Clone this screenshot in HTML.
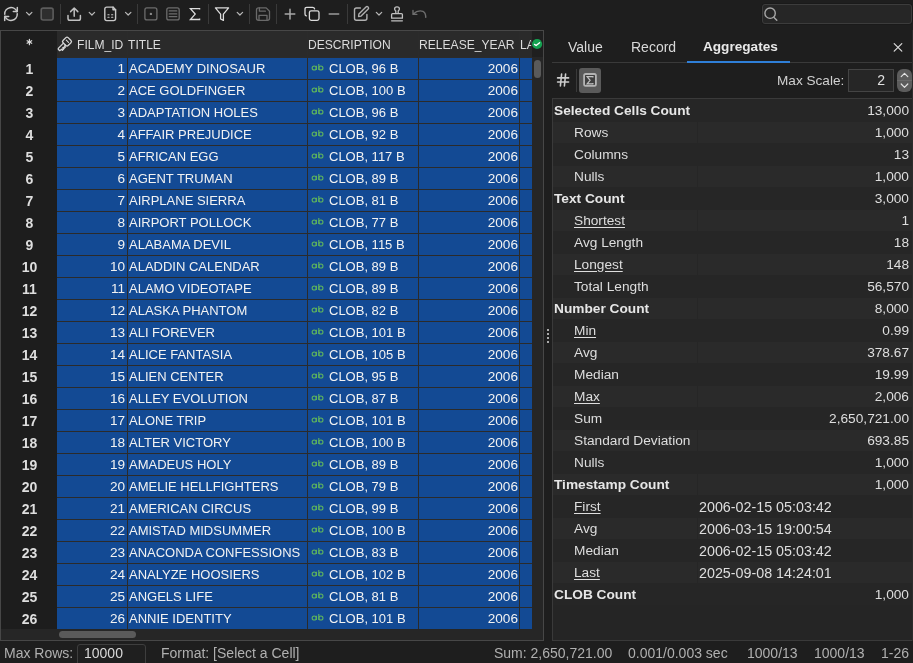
<!DOCTYPE html>
<html><head><meta charset="utf-8">
<style>
*{margin:0;padding:0;box-sizing:border-box}
html{background:#1e1e1e}body{will-change:transform;width:913px;height:663px;overflow:hidden;background:#1e1e1e;font-family:"Liberation Sans",sans-serif;color:#e0e0e0;font-size:13px}
.abs{position:absolute}
svg{position:absolute;overflow:visible}
.sep{position:absolute;width:1px;background:#3a3a3a;top:4px;height:20px}
#grid{position:absolute;left:1px;top:30px;width:543px;height:611px;border:1px solid #474747;background:#262626;overflow:hidden}
.rh{position:absolute;left:2px;width:55px;height:22px;line-height:22px;padding-top:1px;text-align:center;font-weight:bold;color:#dedede;font-size:14px}
.c{position:absolute;height:22px;line-height:22px;padding-top:1px;white-space:nowrap;color:#f2f2f2}
.c.r{text-align:right;font-size:13.6px}
.ab{color:#5cb85c;font-size:9px;font-weight:bold;line-height:20px}
.hl{position:absolute;left:57px;width:475px;height:1px;background:#2b2b2b}
.vl{position:absolute;top:31px;width:1px;height:598px;background:#2b2b2b}
.hdr{position:absolute;top:31.5px;height:26px;line-height:26px;color:#dcdcdc;white-space:nowrap;transform:scaleX(0.93);transform-origin:0 0}
.ar{position:absolute;left:553px;width:359px;height:22px;background:#262626}
.ar.alt{background:#2a2a2a}
.ar.alt::before{content:"";position:absolute;left:0;top:0;width:359px;height:1px;background:#262626}.ar.alt::after{content:"";position:absolute;left:144px;top:0;width:1px;height:22px;background:#262626}
.an{position:absolute;top:1px;line-height:22px;white-space:nowrap;color:#dedede;font-size:13.7px}
.an.b{font-weight:bold;color:#e6e6e6}
.an u{text-decoration:underline;text-underline-offset:2px}
.av{position:absolute;right:3px;top:1px;line-height:22px;color:#dedede;font-size:13.7px}
.st{position:absolute;top:642px;line-height:22px;color:#b0b0b0;white-space:nowrap;font-size:14px}
</style></head><body>
<!-- toolbar -->
<div class="sep" style="left:60px"></div>
<div class="sep" style="left:137px"></div>
<div class="sep" style="left:208px"></div>
<div class="sep" style="left:249px"></div>
<div class="sep" style="left:276px"></div>
<div class="sep" style="left:347px"></div>
<div class="abs" style="left:761px;top:3px;width:152px;height:22px;border:1px solid #1a1a1a;border-radius:4px"></div><div class="abs" style="left:762px;top:4px;width:150px;height:20px;border:1px solid #3c3c3c;border-radius:3px;background:#262626"></div>

<!-- toolbar icons -->
<svg width="913" height="30" style="left:0;top:0" fill="none" stroke-linecap="round" stroke-linejoin="round">
 <!-- refresh -->
 <g stroke="#c8c8c8" stroke-width="1.5">
  <path d="M4.75 14.2 A6.25 6.25 0 0 1 16.9 11.8"/>
  <path d="M17.25 13.8 A6.25 6.25 0 0 1 5.1 16.2"/>
  <path d="M17.3 7.4 V11.6 H13.3"/>
  <path d="M4.7 20.6 V16.4 H8.7"/>
 </g>
 <g stroke="#b8b8b8" stroke-width="1.2">
  <path d="M26.5 12.3 L29.2 15 L31.9 12.3"/>
  <path d="M89.2 12.3 L91.9 15 L94.6 12.3"/>
  <path d="M125.5 12.3 L128.2 15 L130.9 12.3"/>
  <path d="M237.2 12.3 L239.9 15 L242.6 12.3"/>
  <path d="M376.3 12.3 L379 15 L381.7 12.3"/>
 </g>
 <!-- stop -->
 <rect x="41.2" y="8.1" width="11.9" height="11.9" rx="2" fill="#2e2e2e" stroke="#5c5c5c" stroke-width="1.6"/>
 <!-- upload -->
 <g stroke="#c0c0c0" stroke-width="1.5">
  <path d="M68 15.5 V18.4 Q68 20.2 69.8 20.2 H78.6 Q80.4 20.2 80.4 18.4 V15.5"/>
  <path d="M74.2 16.2 V8.2 M70.6 11.6 L74.2 8 L77.8 11.6"/>
 </g>
 <!-- file -->
 <g stroke="#c8c8c8" stroke-width="1.4">
  <path d="M113 7.1 H106.8 Q104.8 7.1 104.8 9.1 V18.6 Q104.8 20.6 106.8 20.6 H113.6 Q115.6 20.6 115.6 18.6 V9.7 Z"/>
  <path d="M113 7.1 V9.7 H115.6"/>
  <path d="M107.9 14.8 H109.1 M111.6 14.8 H112.8 M107.9 17.3 H109.1 M111.6 17.3 H112.8" stroke-width="1.1"/>
 </g>
 <!-- box dot -->
 <rect x="144.9" y="7.9" width="12" height="12" rx="2" stroke="#6c6c6c" stroke-width="1.3"/>
 <circle cx="150.9" cy="13.9" r="1.2" fill="#8a8a8a"/>
 <!-- list box -->
 <rect x="166.8" y="7.9" width="12.4" height="12" rx="2" stroke="#6c6c6c" stroke-width="1.3"/>
 <path d="M169.2 10.9 H176.8 M169.2 13.9 H176.8 M169.2 16.7 H176.8" stroke="#6c6c6c" stroke-width="1.2"/>
 <!-- sigma -->
 <path d="M199.6 9.6 V8.6 H190.4 L195.2 14.1 L190.4 19.5 H199.6 V18.4" stroke="#dcdcdc" stroke-width="1.3" stroke-linecap="butt" stroke-linejoin="miter"/>
 <!-- filter -->
 <path d="M215.4 7.9 H228.6 L223.4 14.2 V20.4 L220.6 19 V14.2 Z" stroke="#dcdcdc" stroke-width="1.3"/>
 <!-- save -->
 <g stroke="#6a6a6a" stroke-width="1.3">
  <path d="M258.6 7.9 H266.2 L269.5 11.2 V18.2 Q269.5 20.3 267.4 20.3 H258.6 Q256.5 20.3 256.5 18.2 V10 Q256.5 7.9 258.6 7.9 Z"/>
  <path d="M259.4 8 V11.2 H265.4"/>
  <path d="M259 20.2 V15.4 H267 V20.2"/>
 </g>
 <!-- plus -->
 <path d="M290 9.2 V18.9 M285.2 14 H294.8" stroke="#a8a8a8" stroke-width="1.5"/>
 <!-- copy -->
 <g stroke="#dcdcdc" stroke-width="1.3">
  <path d="M306.3 15.9 Q305 15.6 305 14 V9 Q305 7.3 306.7 7.3 H312.6 Q314.3 7.3 314.6 8.8"/>
  <rect x="309.4" y="10.8" width="9.6" height="9.6" rx="1.8"/>
 </g>
 <!-- minus -->
 <path d="M329.2 13.9 H338.7" stroke="#9a9a9a" stroke-width="1.5"/>
 <!-- edit -->
 <g stroke="#b0b0b0" stroke-width="1.4">
  <path d="M360.4 8 H356.4 Q354.5 8 354.5 9.9 V18.3 Q354.5 20.2 356.4 20.2 H365 Q366.9 20.2 366.9 18.3 V14.5"/>
  <path d="M358.6 16.5 L358.9 14 L366 6.9 Q367 6 368 6.9 L368.2 7.1 Q369.1 8.1 368.2 9 L361.1 16.1 Z"/>
 </g>
 <!-- stamp -->
 <g stroke="#c0c0c0" stroke-width="1.3">
  <path d="M395.8 13.4 V11 Q394.6 10 394.6 8.9 Q394.6 6.9 397 6.9 Q399.4 6.9 399.4 8.9 Q399.4 10 398.2 11 V13.4"/>
  <path d="M391.6 18.2 V14.6 Q391.6 13.6 392.6 13.6 H401.4 Q402.4 13.6 402.4 14.6 V18.2 Z"/>
  <path d="M391.6 20.8 H402.4"/>
 </g>
 <!-- undo -->
 <path d="M413 14.2 Q418 9.6 423 11.4 Q425.6 12.6 425.8 17.4 M413 10.4 V14.4 H416.8" stroke="#6e6e6e" stroke-width="1.4"/>
 <!-- search -->
 <g stroke="#a8a8a8" stroke-width="1.4">
  <circle cx="770.1" cy="13.2" r="5.2"/>
  <path d="M774 17.4 L776.8 20.2"/>
 </g>
</svg>
<!-- grid -->
<div class="abs" style="left:0px;top:30px;width:544px;height:611px;border:1px solid #474747;background:#262626"></div>
<div class="abs" style="left:1px;top:31px;width:56px;height:598px;background:#1d1d1d"></div>
<div class="abs" style="left:57px;top:31px;width:475px;height:26px;background:#2a2a2a"></div>
<div class="abs" style="left:532px;top:31px;width:11px;height:26px;background:#1f1f1f"></div>
<div class="abs" style="left:532px;top:57px;width:11px;height:572px;background:#262626"></div>
<div class="abs" style="left:534px;top:60px;width:7px;height:18px;background:#5a5a5a;border-radius:4px"></div>
<div class="abs" style="left:57px;top:57px;width:475px;height:572px;background:#134a94"></div>
<div class="abs" style="left:1px;top:629px;width:542px;height:11px;background:#262626"></div>
<div class="abs" style="left:59px;top:631px;width:77px;height:7px;background:#5a5a5a;border-radius:4px"></div>
<div class="hl" style="top:57px"></div>
<div class="hl" style="top:79px"></div>
<div class="hl" style="top:101px"></div>
<div class="hl" style="top:123px"></div>
<div class="hl" style="top:145px"></div>
<div class="hl" style="top:167px"></div>
<div class="hl" style="top:189px"></div>
<div class="hl" style="top:211px"></div>
<div class="hl" style="top:233px"></div>
<div class="hl" style="top:255px"></div>
<div class="hl" style="top:277px"></div>
<div class="hl" style="top:299px"></div>
<div class="hl" style="top:321px"></div>
<div class="hl" style="top:343px"></div>
<div class="hl" style="top:365px"></div>
<div class="hl" style="top:387px"></div>
<div class="hl" style="top:409px"></div>
<div class="hl" style="top:431px"></div>
<div class="hl" style="top:453px"></div>
<div class="hl" style="top:475px"></div>
<div class="hl" style="top:497px"></div>
<div class="hl" style="top:519px"></div>
<div class="hl" style="top:541px"></div>
<div class="hl" style="top:563px"></div>
<div class="hl" style="top:585px"></div>
<div class="hl" style="top:607px"></div>
<div class="abs" style="left:127px;top:31px;width:1px;height:26px;background:#1f1f1f"></div><div class="abs" style="left:307px;top:31px;width:1px;height:26px;background:#1f1f1f"></div><div class="abs" style="left:418px;top:31px;width:1px;height:26px;background:#1f1f1f"></div><div class="abs" style="left:519px;top:31px;width:1px;height:26px;background:#1f1f1f"></div>
<div class="vl" style="left:127px"></div>
<div class="vl" style="left:307px"></div>
<div class="vl" style="left:418px"></div>
<div class="vl" style="left:519px"></div>
<svg width="10" height="10" style="left:0;top:0" fill="none" stroke="#dcdcdc" stroke-width="1.2" stroke-linecap="round"><path d="M29.4 39.3 V44.7 M27.1 40.7 L31.7 43.3 M27.1 43.3 L31.7 40.7"/></svg>
<div class="hdr" style="left:77px">FILM_ID</div>
<div class="hdr" style="left:128px">TITLE</div>
<div class="hdr" style="left:308px">DESCRIPTION</div>
<div class="hdr" style="left:419px">RELEASE_YEAR</div>
<div class="hdr" style="left:520px;width:12px;overflow:hidden">LA</div>
<svg width="20" height="20" style="left:0;top:0" fill="none" stroke-linecap="round" stroke-linejoin="round">
 <circle cx="537.1" cy="44" r="5.1" fill="#14a150"/>
 <path d="M534.5 44.4 L536.1 45.5 L539.6 42.7" stroke="#ffffff" stroke-width="1.3"/>
 <g stroke="#d8d8d8" stroke-width="1.3" transform="translate(67 41.6) rotate(-45)">
  <rect x="-3.6" y="-3.6" width="7.2" height="7.2" rx="1.6"/>
  <path d="M0.6 -1.6 V1.6" stroke-width="1.1"/>
  <path d="M-3.6 -1.4 H-10.6 Q-11.6 -1.4 -11.6 -0.4 V0.6 Q-11.6 1.5 -10.6 1.5 H-9.4 V2.9 H-7.6 V1.5 H-6.6 V2.7 H-5 V1.5 H-3.6"/>
 </g>
</svg>
<div class="rh" style="top:57px">1</div>
<div class="c r" style="top:57px;left:57px;width:68px">1</div>
<div class="c" style="top:57px;left:129px">ACADEMY DINOSAUR</div>
<div class="c" style="top:57px;left:329px">CLOB, 96 B</div>
<div class="c r" style="top:57px;left:419px;width:99px">2006</div>
<div class="rh" style="top:79px">2</div>
<div class="c r" style="top:79px;left:57px;width:68px">2</div>
<div class="c" style="top:79px;left:129px">ACE GOLDFINGER</div>
<div class="c" style="top:79px;left:329px">CLOB, 100 B</div>
<div class="c r" style="top:79px;left:419px;width:99px">2006</div>
<div class="rh" style="top:101px">3</div>
<div class="c r" style="top:101px;left:57px;width:68px">3</div>
<div class="c" style="top:101px;left:129px">ADAPTATION HOLES</div>
<div class="c" style="top:101px;left:329px">CLOB, 96 B</div>
<div class="c r" style="top:101px;left:419px;width:99px">2006</div>
<div class="rh" style="top:123px">4</div>
<div class="c r" style="top:123px;left:57px;width:68px">4</div>
<div class="c" style="top:123px;left:129px">AFFAIR PREJUDICE</div>
<div class="c" style="top:123px;left:329px">CLOB, 92 B</div>
<div class="c r" style="top:123px;left:419px;width:99px">2006</div>
<div class="rh" style="top:145px">5</div>
<div class="c r" style="top:145px;left:57px;width:68px">5</div>
<div class="c" style="top:145px;left:129px">AFRICAN EGG</div>
<div class="c" style="top:145px;left:329px">CLOB, 117 B</div>
<div class="c r" style="top:145px;left:419px;width:99px">2006</div>
<div class="rh" style="top:167px">6</div>
<div class="c r" style="top:167px;left:57px;width:68px">6</div>
<div class="c" style="top:167px;left:129px">AGENT TRUMAN</div>
<div class="c" style="top:167px;left:329px">CLOB, 89 B</div>
<div class="c r" style="top:167px;left:419px;width:99px">2006</div>
<div class="rh" style="top:189px">7</div>
<div class="c r" style="top:189px;left:57px;width:68px">7</div>
<div class="c" style="top:189px;left:129px">AIRPLANE SIERRA</div>
<div class="c" style="top:189px;left:329px">CLOB, 81 B</div>
<div class="c r" style="top:189px;left:419px;width:99px">2006</div>
<div class="rh" style="top:211px">8</div>
<div class="c r" style="top:211px;left:57px;width:68px">8</div>
<div class="c" style="top:211px;left:129px">AIRPORT POLLOCK</div>
<div class="c" style="top:211px;left:329px">CLOB, 77 B</div>
<div class="c r" style="top:211px;left:419px;width:99px">2006</div>
<div class="rh" style="top:233px">9</div>
<div class="c r" style="top:233px;left:57px;width:68px">9</div>
<div class="c" style="top:233px;left:129px">ALABAMA DEVIL</div>
<div class="c" style="top:233px;left:329px">CLOB, 115 B</div>
<div class="c r" style="top:233px;left:419px;width:99px">2006</div>
<div class="rh" style="top:255px">10</div>
<div class="c r" style="top:255px;left:57px;width:68px">10</div>
<div class="c" style="top:255px;left:129px">ALADDIN CALENDAR</div>
<div class="c" style="top:255px;left:329px">CLOB, 89 B</div>
<div class="c r" style="top:255px;left:419px;width:99px">2006</div>
<div class="rh" style="top:277px">11</div>
<div class="c r" style="top:277px;left:57px;width:68px">11</div>
<div class="c" style="top:277px;left:129px">ALAMO VIDEOTAPE</div>
<div class="c" style="top:277px;left:329px">CLOB, 89 B</div>
<div class="c r" style="top:277px;left:419px;width:99px">2006</div>
<div class="rh" style="top:299px">12</div>
<div class="c r" style="top:299px;left:57px;width:68px">12</div>
<div class="c" style="top:299px;left:129px">ALASKA PHANTOM</div>
<div class="c" style="top:299px;left:329px">CLOB, 82 B</div>
<div class="c r" style="top:299px;left:419px;width:99px">2006</div>
<div class="rh" style="top:321px">13</div>
<div class="c r" style="top:321px;left:57px;width:68px">13</div>
<div class="c" style="top:321px;left:129px">ALI FOREVER</div>
<div class="c" style="top:321px;left:329px">CLOB, 101 B</div>
<div class="c r" style="top:321px;left:419px;width:99px">2006</div>
<div class="rh" style="top:343px">14</div>
<div class="c r" style="top:343px;left:57px;width:68px">14</div>
<div class="c" style="top:343px;left:129px">ALICE FANTASIA</div>
<div class="c" style="top:343px;left:329px">CLOB, 105 B</div>
<div class="c r" style="top:343px;left:419px;width:99px">2006</div>
<div class="rh" style="top:365px">15</div>
<div class="c r" style="top:365px;left:57px;width:68px">15</div>
<div class="c" style="top:365px;left:129px">ALIEN CENTER</div>
<div class="c" style="top:365px;left:329px">CLOB, 95 B</div>
<div class="c r" style="top:365px;left:419px;width:99px">2006</div>
<div class="rh" style="top:387px">16</div>
<div class="c r" style="top:387px;left:57px;width:68px">16</div>
<div class="c" style="top:387px;left:129px">ALLEY EVOLUTION</div>
<div class="c" style="top:387px;left:329px">CLOB, 87 B</div>
<div class="c r" style="top:387px;left:419px;width:99px">2006</div>
<div class="rh" style="top:409px">17</div>
<div class="c r" style="top:409px;left:57px;width:68px">17</div>
<div class="c" style="top:409px;left:129px">ALONE TRIP</div>
<div class="c" style="top:409px;left:329px">CLOB, 101 B</div>
<div class="c r" style="top:409px;left:419px;width:99px">2006</div>
<div class="rh" style="top:431px">18</div>
<div class="c r" style="top:431px;left:57px;width:68px">18</div>
<div class="c" style="top:431px;left:129px">ALTER VICTORY</div>
<div class="c" style="top:431px;left:329px">CLOB, 100 B</div>
<div class="c r" style="top:431px;left:419px;width:99px">2006</div>
<div class="rh" style="top:453px">19</div>
<div class="c r" style="top:453px;left:57px;width:68px">19</div>
<div class="c" style="top:453px;left:129px">AMADEUS HOLY</div>
<div class="c" style="top:453px;left:329px">CLOB, 89 B</div>
<div class="c r" style="top:453px;left:419px;width:99px">2006</div>
<div class="rh" style="top:475px">20</div>
<div class="c r" style="top:475px;left:57px;width:68px">20</div>
<div class="c" style="top:475px;left:129px">AMELIE HELLFIGHTERS</div>
<div class="c" style="top:475px;left:329px">CLOB, 79 B</div>
<div class="c r" style="top:475px;left:419px;width:99px">2006</div>
<div class="rh" style="top:497px">21</div>
<div class="c r" style="top:497px;left:57px;width:68px">21</div>
<div class="c" style="top:497px;left:129px">AMERICAN CIRCUS</div>
<div class="c" style="top:497px;left:329px">CLOB, 99 B</div>
<div class="c r" style="top:497px;left:419px;width:99px">2006</div>
<div class="rh" style="top:519px">22</div>
<div class="c r" style="top:519px;left:57px;width:68px">22</div>
<div class="c" style="top:519px;left:129px">AMISTAD MIDSUMMER</div>
<div class="c" style="top:519px;left:329px">CLOB, 100 B</div>
<div class="c r" style="top:519px;left:419px;width:99px">2006</div>
<div class="rh" style="top:541px">23</div>
<div class="c r" style="top:541px;left:57px;width:68px">23</div>
<div class="c" style="top:541px;left:129px">ANACONDA CONFESSIONS</div>
<div class="c" style="top:541px;left:329px">CLOB, 83 B</div>
<div class="c r" style="top:541px;left:419px;width:99px">2006</div>
<div class="rh" style="top:563px">24</div>
<div class="c r" style="top:563px;left:57px;width:68px">24</div>
<div class="c" style="top:563px;left:129px">ANALYZE HOOSIERS</div>
<div class="c" style="top:563px;left:329px">CLOB, 102 B</div>
<div class="c r" style="top:563px;left:419px;width:99px">2006</div>
<div class="rh" style="top:585px">25</div>
<div class="c r" style="top:585px;left:57px;width:68px">25</div>
<div class="c" style="top:585px;left:129px">ANGELS LIFE</div>
<div class="c" style="top:585px;left:329px">CLOB, 81 B</div>
<div class="c r" style="top:585px;left:419px;width:99px">2006</div>
<div class="rh" style="top:607px">26</div>
<div class="c r" style="top:607px;left:57px;width:68px">26</div>
<div class="c" style="top:607px;left:129px">ANNIE IDENTITY</div>
<div class="c" style="top:607px;left:329px">CLOB, 101 B</div>
<div class="c r" style="top:607px;left:419px;width:99px">2006</div>
<svg width="10" height="10" style="left:0;top:0" fill="none" stroke="#5db35d" stroke-width="1.1"><path d="M316.4 65.8 V70.1 M318.8 63.9 V70.1"/><circle cx="314.2" cy="68" r="2.05"/><circle cx="320.9" cy="68" r="2.05"/><path d="M316.4 87.8 V92.1 M318.8 85.9 V92.1"/><circle cx="314.2" cy="90" r="2.05"/><circle cx="320.9" cy="90" r="2.05"/><path d="M316.4 109.8 V114.1 M318.8 107.9 V114.1"/><circle cx="314.2" cy="112" r="2.05"/><circle cx="320.9" cy="112" r="2.05"/><path d="M316.4 131.8 V136.1 M318.8 129.9 V136.1"/><circle cx="314.2" cy="134" r="2.05"/><circle cx="320.9" cy="134" r="2.05"/><path d="M316.4 153.8 V158.1 M318.8 151.9 V158.1"/><circle cx="314.2" cy="156" r="2.05"/><circle cx="320.9" cy="156" r="2.05"/><path d="M316.4 175.8 V180.1 M318.8 173.9 V180.1"/><circle cx="314.2" cy="178" r="2.05"/><circle cx="320.9" cy="178" r="2.05"/><path d="M316.4 197.8 V202.1 M318.8 195.9 V202.1"/><circle cx="314.2" cy="200" r="2.05"/><circle cx="320.9" cy="200" r="2.05"/><path d="M316.4 219.8 V224.1 M318.8 217.9 V224.1"/><circle cx="314.2" cy="222" r="2.05"/><circle cx="320.9" cy="222" r="2.05"/><path d="M316.4 241.8 V246.1 M318.8 239.9 V246.1"/><circle cx="314.2" cy="244" r="2.05"/><circle cx="320.9" cy="244" r="2.05"/><path d="M316.4 263.8 V268.1 M318.8 261.9 V268.1"/><circle cx="314.2" cy="266" r="2.05"/><circle cx="320.9" cy="266" r="2.05"/><path d="M316.4 285.8 V290.1 M318.8 283.9 V290.1"/><circle cx="314.2" cy="288" r="2.05"/><circle cx="320.9" cy="288" r="2.05"/><path d="M316.4 307.8 V312.1 M318.8 305.9 V312.1"/><circle cx="314.2" cy="310" r="2.05"/><circle cx="320.9" cy="310" r="2.05"/><path d="M316.4 329.8 V334.1 M318.8 327.9 V334.1"/><circle cx="314.2" cy="332" r="2.05"/><circle cx="320.9" cy="332" r="2.05"/><path d="M316.4 351.8 V356.1 M318.8 349.9 V356.1"/><circle cx="314.2" cy="354" r="2.05"/><circle cx="320.9" cy="354" r="2.05"/><path d="M316.4 373.8 V378.1 M318.8 371.9 V378.1"/><circle cx="314.2" cy="376" r="2.05"/><circle cx="320.9" cy="376" r="2.05"/><path d="M316.4 395.8 V400.1 M318.8 393.9 V400.1"/><circle cx="314.2" cy="398" r="2.05"/><circle cx="320.9" cy="398" r="2.05"/><path d="M316.4 417.8 V422.1 M318.8 415.9 V422.1"/><circle cx="314.2" cy="420" r="2.05"/><circle cx="320.9" cy="420" r="2.05"/><path d="M316.4 439.8 V444.1 M318.8 437.9 V444.1"/><circle cx="314.2" cy="442" r="2.05"/><circle cx="320.9" cy="442" r="2.05"/><path d="M316.4 461.8 V466.1 M318.8 459.9 V466.1"/><circle cx="314.2" cy="464" r="2.05"/><circle cx="320.9" cy="464" r="2.05"/><path d="M316.4 483.8 V488.1 M318.8 481.9 V488.1"/><circle cx="314.2" cy="486" r="2.05"/><circle cx="320.9" cy="486" r="2.05"/><path d="M316.4 505.8 V510.1 M318.8 503.9 V510.1"/><circle cx="314.2" cy="508" r="2.05"/><circle cx="320.9" cy="508" r="2.05"/><path d="M316.4 527.8 V532.1 M318.8 525.9 V532.1"/><circle cx="314.2" cy="530" r="2.05"/><circle cx="320.9" cy="530" r="2.05"/><path d="M316.4 549.8 V554.1 M318.8 547.9 V554.1"/><circle cx="314.2" cy="552" r="2.05"/><circle cx="320.9" cy="552" r="2.05"/><path d="M316.4 571.8 V576.1 M318.8 569.9 V576.1"/><circle cx="314.2" cy="574" r="2.05"/><circle cx="320.9" cy="574" r="2.05"/><path d="M316.4 593.8 V598.1 M318.8 591.9 V598.1"/><circle cx="314.2" cy="596" r="2.05"/><circle cx="320.9" cy="596" r="2.05"/><path d="M316.4 615.8 V620.1 M318.8 613.9 V620.1"/><circle cx="314.2" cy="618" r="2.05"/><circle cx="320.9" cy="618" r="2.05"/></svg>

<!-- splitter -->
<div class="abs" style="left:547px;top:329px;width:2px;height:2px;background:#aaa"></div>
<div class="abs" style="left:547px;top:333px;width:2px;height:2px;background:#aaa"></div>
<div class="abs" style="left:547px;top:337px;width:2px;height:2px;background:#aaa"></div>
<div class="abs" style="left:547px;top:341px;width:2px;height:2px;background:#aaa"></div>

<!-- right panel -->
<div class="abs" style="left:552px;top:62px;width:361px;height:1px;background:#3a3a3a"></div>
<div class="abs" style="left:687px;top:61px;width:103px;height:2px;background:#2f7fd8"></div>
<div class="abs" style="left:568px;top:35px;line-height:24px;font-size:14px;color:#d8d8d8">Value</div>
<div class="abs" style="left:631px;top:35px;line-height:24px;font-size:14px;color:#d8d8d8">Record</div>
<div class="abs" style="left:703px;top:35px;line-height:24px;font-size:13.6px;font-weight:bold;color:#e8e8e8">Aggregates</div>
<svg width="20" height="20" style="left:0;top:0" fill="none" stroke="#cdcdcd" stroke-width="1.6" stroke-linecap="round"><path d="M561.6 74 L560.4 86 M565.6 74 L564.4 86 M557.6 77.9 H568.6 M557.6 82 H568.6"/></svg>
<div class="abs" style="left:576px;top:69px;width:1px;height:23px;background:#3a3a3a"></div>
<div class="abs" style="left:579px;top:68px;width:22px;height:25px;background:#5a5a5a;border-radius:3px"></div>
<svg width="20" height="20" style="left:0;top:0" fill="none" stroke-linecap="round" stroke-linejoin="round">
 <rect x="584.1" y="74" width="11.8" height="11.9" rx="1.6" fill="#404040" stroke="#b4b4b4" stroke-width="1.8"/>
 <path d="M592.9 77.5 V76.7 H587.1 L590.1 80.3 L587.1 83.9 H592.9 V83.1" stroke="#c4c4c4" stroke-width="1.2" stroke-linecap="butt" stroke-linejoin="miter"/>
 <path d="M894.2 43.6 L901.8 51.2 M901.8 43.6 L894.2 51.2" stroke="#dcdcdc" stroke-width="1.2"/>
</svg>
<div class="abs" style="left:777px;top:69.5px;line-height:22px;font-size:13.6px;color:#d0d0d0">Max Scale:</div>
<div class="abs" style="left:848px;top:69px;width:46px;height:23px;border:1px solid #444;background:#262626;text-align:right;padding-right:8px;line-height:21px;font-size:14px;color:#e0e0e0">2</div>
<div class="abs" style="left:897px;top:69px;width:15px;height:23px;background:#5c5c5c;border-radius:6px"></div><div class="abs" style="left:897px;top:80px;width:15px;height:1px;background:#6a6a6a"></div>
<svg width="20" height="20" style="left:0;top:0" fill="none" stroke-linecap="round" stroke-linejoin="round">
 <g stroke="#e4e4e4" stroke-width="1.2">
  <path d="M901.2 76.6 L904.5 73.4 L907.8 76.6"/>
  <path d="M901.2 84 L904.5 87.3 L907.8 84"/>
 </g>
</svg>
<div class="abs" style="left:552px;top:98px;width:361px;height:543px;border-left:1px solid #3a3a3a;border-top:1px solid #3a3a3a;border-bottom:1px solid #3a3a3a;background:#252525"></div>
<div class="ar" style="top:99px">
<span class="an b" style="left:1px">Selected Cells Count</span>
<span class="av">13,000</span>
</div>
<div class="ar alt" style="top:121px">
<span class="an" style="left:21px">Rows</span>
<span class="av">1,000</span>
</div>
<div class="ar" style="top:143px">
<span class="an" style="left:21px">Columns</span>
<span class="av">13</span>
</div>
<div class="ar alt" style="top:165px">
<span class="an" style="left:21px">Nulls</span>
<span class="av">1,000</span>
</div>
<div class="ar" style="top:187px">
<span class="an b" style="left:1px">Text Count</span>
<span class="av">3,000</span>
</div>
<div class="ar alt" style="top:209px">
<span class="an" style="left:21px"><u>Shortest</u></span>
<span class="av">1</span>
</div>
<div class="ar" style="top:231px">
<span class="an" style="left:21px">Avg Length</span>
<span class="av">18</span>
</div>
<div class="ar alt" style="top:253px">
<span class="an" style="left:21px"><u>Longest</u></span>
<span class="av">148</span>
</div>
<div class="ar" style="top:275px">
<span class="an" style="left:21px">Total Length</span>
<span class="av">56,570</span>
</div>
<div class="ar alt" style="top:297px">
<span class="an b" style="left:1px">Number Count</span>
<span class="av">8,000</span>
</div>
<div class="ar" style="top:319px">
<span class="an" style="left:21px"><u>Min</u></span>
<span class="av">0.99</span>
</div>
<div class="ar alt" style="top:341px">
<span class="an" style="left:21px">Avg</span>
<span class="av">378.67</span>
</div>
<div class="ar" style="top:363px">
<span class="an" style="left:21px">Median</span>
<span class="av">19.99</span>
</div>
<div class="ar alt" style="top:385px">
<span class="an" style="left:21px"><u>Max</u></span>
<span class="av">2,006</span>
</div>
<div class="ar" style="top:407px">
<span class="an" style="left:21px">Sum</span>
<span class="av">2,650,721.00</span>
</div>
<div class="ar alt" style="top:429px">
<span class="an" style="left:21px">Standard Deviation</span>
<span class="av">693.85</span>
</div>
<div class="ar" style="top:451px">
<span class="an" style="left:21px">Nulls</span>
<span class="av">1,000</span>
</div>
<div class="ar alt" style="top:473px">
<span class="an b" style="left:1px">Timestamp Count</span>
<span class="av">1,000</span>
</div>
<div class="ar" style="top:495px">
<span class="an" style="left:21px"><u>First</u></span>
<span class="an" style="left:146px;font-size:14.3px">2006-02-15 05:03:42</span>
</div>
<div class="ar alt" style="top:517px">
<span class="an" style="left:21px">Avg</span>
<span class="an" style="left:146px;font-size:14.3px">2006-03-15 19:00:54</span>
</div>
<div class="ar" style="top:539px">
<span class="an" style="left:21px">Median</span>
<span class="an" style="left:146px;font-size:14.3px">2006-02-15 05:03:42</span>
</div>
<div class="ar alt" style="top:561px">
<span class="an" style="left:21px"><u>Last</u></span>
<span class="an" style="left:146px;font-size:14.3px">2025-09-08 14:24:01</span>
</div>
<div class="ar" style="top:583px">
<span class="an b" style="left:1px">CLOB Count</span>
<span class="av">1,000</span>
</div>

<div class="abs" style="left:912px;top:30px;width:1px;height:611px;background:#2c2c2c"></div>
<!-- status bar -->
<div class="st" style="left:4px">Max Rows:</div>
<div class="abs" style="left:77px;top:644px;width:69px;height:22px;border:1px solid #3e3e3e;border-radius:3px;background:#1f1f1f"></div>
<div class="st" style="left:84px;color:#d8d8d8">10000</div>
<div class="st" style="left:161px">Format: [Select a Cell]</div>
<div class="st" style="left:494px">Sum: 2,650,721.00</div>
<div class="st" style="left:628px">0.001/0.003 sec</div>
<div class="st" style="left:747px">1000/13</div>
<div class="st" style="left:814px">1000/13</div>
<div class="st" style="left:881px">1-26</div>
</body></html>
